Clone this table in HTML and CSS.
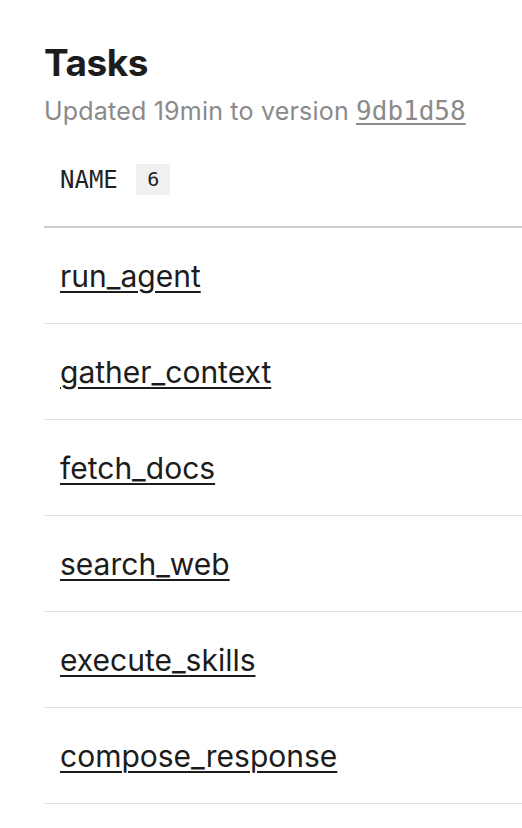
FILE: index.html
```html
<!DOCTYPE html>
<html lang="en">
<head>
    <meta charset="UTF-8">
    <title>Tasks</title>
    <link rel="stylesheet" href="styles.css">
</head>
<body>
    <div class="page">
        <h1 class="title">Tasks</h1>
        <p class="subtitle">Updated 19min to version <a href="#" class="version">9db1d58</a></p>

        <table class="tasks">
            <thead>
                <tr>
                    <th>NAME <span class="count">6</span></th>
                </tr>
            </thead>
            <tbody>
                <tr><td><a href="#">run_agent</a></td></tr>
                <tr><td><a href="#">gather_context</a></td></tr>
                <tr><td><a href="#">fetch_docs</a></td></tr>
                <tr><td><a href="#">search_web</a></td></tr>
                <tr><td><a href="#">execute_skills</a></td></tr>
                <tr><td><a href="#">compose_response</a></td></tr>
            </tbody>
        </table>
    </div>
</body>
</html>
```

FILE: styles.css
```css
body {
    margin: 0;
    font-family: 'Inter', 'Liberation Sans', sans-serif;
    color: #1c1c1c;
    background: #fff;
}

.page {
    padding: 38px 0 0 44px;
}

.title {
    margin: 0;
    font-size: 37px;
    font-weight: 700;
    letter-spacing: -0.5px;
    line-height: 50px;
}

.subtitle {
    margin: 3px 0 0;
    font-size: 25px;
    line-height: 40px;
    color: #8a8a8a;
    letter-spacing: 0.2px;
}

.version {
    color: #8a8a8a;
    font-family: 'DejaVu Sans Mono', monospace;
    font-size: 26px;
    letter-spacing: 0;
    text-underline-offset: 3px;
}

.tasks {
    width: 100%;
    border-collapse: collapse;
    margin-top: 10px;
}

.tasks th {
    text-align: left;
    font-family: 'DejaVu Sans Mono', monospace;
    font-weight: 400;
    font-size: 24px;
    line-height: 32px;
    padding: 23px 16px 30px;
    border-bottom: 2px solid #cccccc;
    color: #222;
}

.count {
    display: inline-block;
    margin-left: 4px;
    padding: 0 11px;
    background: #f0f0f0;
    font-size: 20px;
    line-height: 31px;
    vertical-align: top;
}

.tasks td {
    height: 95px;
    padding: 0 16px;
    border-bottom: 1px solid #e0e0e0;
    font-size: 30px;
}

.tasks td a {
    color: #1c1c1c;
    text-underline-offset: 4px;
    text-decoration-thickness: 2px;
}
```
